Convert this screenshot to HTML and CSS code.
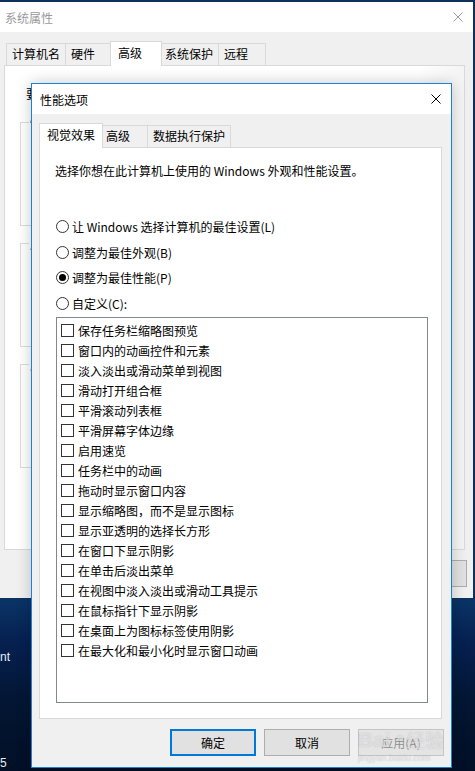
FILE: index.html
```html
<!DOCTYPE html>
<html lang="zh-CN">
<head>
<meta charset="utf-8">
<title>性能选项</title>
<link rel="stylesheet" href="styles.css">
</head>
<body class="desktop">
  <span class="desk-label desk-label-a">nt</span>
  <span class="desk-label desk-label-b">5</span>

  <div class="sys-window">
    <div class="titlebar titlebar-inactive">
      <span class="title">系统属性</span>
      <svg class="close" width="10" height="10" viewBox="0 0 10 10"><path d="M0.5 0.5L9.5 9.5M9.5 0.5L0.5 9.5" stroke="#9a9a9a" stroke-width="1"/></svg>
    </div>
    <div class="win-body sys-body">
      <div class="tabs">
        <div class="tab">计算机名</div>
        <div class="tab">硬件</div>
        <div class="tab tab-active">高级</div>
        <div class="tab">系统保护</div>
        <div class="tab">远程</div>
      </div>
      <div class="panel sys-panel">
        <p class="sys-intro">要进行大多数更改，你必须作为管理员登录。</p>
        <div class="group"><span class="group-label">性能</span></div>
        <div class="group"><span class="group-label">用户配置文件</span></div>
        <div class="group"><span class="group-label">启动和故障恢复</span></div>
      </div>
      <div class="btn-row sys-btn-row">
        <div class="btn">确定</div>
        <div class="btn">取消</div>
        <div class="btn">应用(A)</div>
      </div>
    </div>
  </div>

  <div class="dialog">
    <div class="titlebar dialog-titlebar">
      <span class="title">性能选项</span>
      <svg class="close" width="10" height="10" viewBox="0 0 10 10"><path d="M0.5 0.5L9.5 9.5M9.5 0.5L0.5 9.5" stroke="#000" stroke-width="1"/></svg>
    </div>
    <div class="win-body dialog-body">
      <div class="tabs">
        <div class="tab tab-active">视觉效果</div>
        <div class="tab">高级</div>
        <div class="tab">数据执行保护</div>
      </div>
      <div class="panel dialog-panel">
        <p class="intro">选择你想在此计算机上使用的 Windows 外观和性能设置。</p>
        <div class="radios">
          <div class="radio-row"><span class="radio"></span><span>让 Windows 选择计算机的最佳设置(L)</span></div>
          <div class="radio-row"><span class="radio"></span><span>调整为最佳外观(B)</span></div>
          <div class="radio-row"><span class="radio radio-on"></span><span>调整为最佳性能(P)</span></div>
          <div class="radio-row"><span class="radio"></span><span>自定义(C):</span></div>
        </div>
        <div class="listbox">
          <div class="check-row"><span class="check"></span><span>保存任务栏缩略图预览</span></div>
          <div class="check-row"><span class="check"></span><span>窗口内的动画控件和元素</span></div>
          <div class="check-row"><span class="check"></span><span>淡入淡出或滑动菜单到视图</span></div>
          <div class="check-row"><span class="check"></span><span>滑动打开组合框</span></div>
          <div class="check-row"><span class="check"></span><span>平滑滚动列表框</span></div>
          <div class="check-row"><span class="check"></span><span>平滑屏幕字体边缘</span></div>
          <div class="check-row"><span class="check"></span><span>启用速览</span></div>
          <div class="check-row"><span class="check"></span><span>任务栏中的动画</span></div>
          <div class="check-row"><span class="check"></span><span>拖动时显示窗口内容</span></div>
          <div class="check-row"><span class="check"></span><span>显示缩略图，而不是显示图标</span></div>
          <div class="check-row"><span class="check"></span><span>显示亚透明的选择长方形</span></div>
          <div class="check-row"><span class="check"></span><span>在窗口下显示阴影</span></div>
          <div class="check-row"><span class="check"></span><span>在单击后淡出菜单</span></div>
          <div class="check-row"><span class="check"></span><span>在视图中淡入淡出或滑动工具提示</span></div>
          <div class="check-row"><span class="check"></span><span>在鼠标指针下显示阴影</span></div>
          <div class="check-row"><span class="check"></span><span>在桌面上为图标标签使用阴影</span></div>
          <div class="check-row"><span class="check"></span><span>在最大化和最小化时显示窗口动画</span></div>
        </div>
      </div>
      <div class="btn-row dialog-btn-row">
        <div class="btn btn-default">确定</div>
        <div class="btn">取消</div>
        <div class="btn btn-disabled">应用(A)</div>
      </div>
    </div>
  </div>

  <div class="watermark">
    <span class="wm-bai">Bai</span><span class="wm-paw">&#x25CF;</span><span class="wm-jy">经验</span>
    <span class="wm-url">jingyan.baidu.com</span>
  </div>
</body>
</html>
```
FILE: styles.css
```css
* { box-sizing: border-box; }

html, body { margin: 0; padding: 0; }

.desktop {
  position: relative;
  width: 475px;
  height: 771px;
  overflow: hidden;
  font-family: "Noto Sans CJK SC", "Microsoft YaHei", sans-serif;
  font-size: 12px;
  line-height: 17px;
  color: #000;
  background:
    linear-gradient(180deg, #0c2f5c 0px, #0c2f5c 598px, #0a3466 600px, #062152 640px, #031633 700px, #020f26 771px);
}

.desk-label {
  position: absolute;
  left: 0;
  color: #e8eef7;
  font-family: "Liberation Sans", Arial, sans-serif;
  font-size: 12px;
}
.desk-label-a { top: 649px; }
.desk-label-b { top: 755px; left: 0; }

/* ---------- windows ---------- */
.sys-window {
  position: absolute;
  left: 0;
  top: 2px;
  width: 473px;
  height: 596px;
  background: #f0f0f0;
  display: flex;
  flex-direction: column;
}

.titlebar {
  height: 30px;
  background: #fff;
  display: flex;
  align-items: center;
  justify-content: space-between;
  flex: 0 0 auto;
}
.titlebar-inactive { padding: 0 10px 0 5px; color: #9a9a9a; }
.titlebar .close { display: block; }

.win-body {
  flex: 1 1 auto;
  display: flex;
  flex-direction: column;
}
.sys-body { padding: 9px 8px 0 4px; }

.tabs {
  display: flex;
  align-items: flex-end;
  height: 24px;
  padding-left: 2px;
  flex: 0 0 auto;
}
.tab {
  height: 22px;
  min-width: 48px;
  padding: 0 5px;
  border: 1px solid #d9d9d9;
  border-bottom: none;
  background: #f0f0f0;
  line-height: 20px;
  white-space: nowrap;
}
.tab + .tab { margin-left: -1px; }
.tab-active {
  position: relative;
  z-index: 2;
  height: 25px;
  min-width: 52px;
  margin: 0 -2px -1px -2px;
  padding: 0 7px;
  background: #fff;
  line-height: 21px;
}
.tab + .tab-active { margin-left: -3px; }

.panel {
  background: #fff;
  border: 1px solid #d9d9d9;
  flex: 0 0 auto;
  position: relative;
  z-index: 1;
}

.sys-panel {
  height: 485px;
  padding: 0 16px 0 15px;
  background: linear-gradient(90deg, #fff 0, #fff 90%, #f4f4f4 100%);
}
.sys-intro {
  margin: 19px 0 0 6px;
  white-space: nowrap;
}
.group {
  height: 104px;
  margin-top: 20px;
  border: 1px solid #dcdcdc;
}
.group + .group { margin-top: 17px; }
.group-label {
  display: inline-block;
  margin: -9px 0 0 8px;
  padding: 0 1px;
  background: #fff;
  vertical-align: top;
}

.btn-row {
  display: flex;
  justify-content: flex-end;
  gap: 8px;
  margin-top: 10px;
  flex: 0 0 auto;
}
.sys-btn-row { margin-right: -2px; }

.btn {
  width: 86px;
  height: 27px;
  border: 1px solid #adadad;
  background: #e1e1e1;
  display: flex;
  align-items: center;
  justify-content: center;
}
.btn-default { border: 2px solid #0078d7; }
.btn-disabled { color: #8f8f8f; border-color: #c4c4c4; background: #e4e4e4; }

/* ---------- dialog ---------- */
.dialog {
  position: absolute;
  z-index: 5;
  left: 31px;
  top: 83px;
  width: 421px;
  height: 685px;
  border: 1px solid #1a82d9;
  background: #f0f0f0;
  display: flex;
  flex-direction: column;
  box-shadow: 0 0 14px rgba(0, 0, 0, 0.22);
}
.dialog-titlebar { padding: 0 10px 0 8px; }
.dialog-body { padding: 9px 9px 0 7px; }

.dialog-panel {
  height: 572px;
  padding: 0 13px 0 15px;
}
.intro {
  margin: 14px 0 0 0;
  white-space: nowrap;
}
.radios {
  margin-top: 35px;
  padding-left: 1px;
}
.radio-row {
  height: 25.5px;
  display: flex;
  align-items: center;
  gap: 3px;
  white-space: nowrap;
}
.radio {
  width: 13px;
  height: 13px;
  border: 1px solid #333;
  border-radius: 50%;
  background: #fff;
  flex: 0 0 auto;
  display: flex;
  align-items: center;
  justify-content: center;
}
.radio-on::after {
  content: "";
  width: 7px;
  height: 7px;
  border-radius: 50%;
  background: #000;
}

.listbox {
  margin: 1px 0 0 1px;
  height: 386px;
  border: 1px solid #828790;
  padding: 2px 0 0 4px;
}
.check-row {
  height: 20px;
  display: flex;
  align-items: center;
  gap: 4px;
  white-space: nowrap;
}
.check {
  width: 13px;
  height: 13px;
  border: 1px solid #333;
  background: #fff;
  flex: 0 0 auto;
}

.dialog-btn-row { margin-right: -2px; }

/* ---------- watermark ---------- */
.watermark {
  position: absolute;
  z-index: 10;
  left: 358px;
  top: 728px;
  width: 90px;
  height: 40px;
  color: rgba(255, 255, 255, 0.6);
  text-shadow: 0 0 1px rgba(0, 0, 0, 0.25);
  font-family: "Liberation Sans", Arial, sans-serif;
  pointer-events: none;
}
.wm-bai { position: absolute; left: 0; top: 0; font-size: 21px; line-height: 24px; font-weight: bold; }
.wm-paw { position: absolute; left: 38px; top: 0; font-size: 14px; line-height: 18px; }
.wm-jy { position: absolute; left: 48px; top: 1px; font-size: 19px; line-height: 22px; font-family: "Noto Sans CJK SC", sans-serif; }
.wm-url { position: absolute; left: 0; top: 25px; font-size: 9px; line-height: 10px; }
```
